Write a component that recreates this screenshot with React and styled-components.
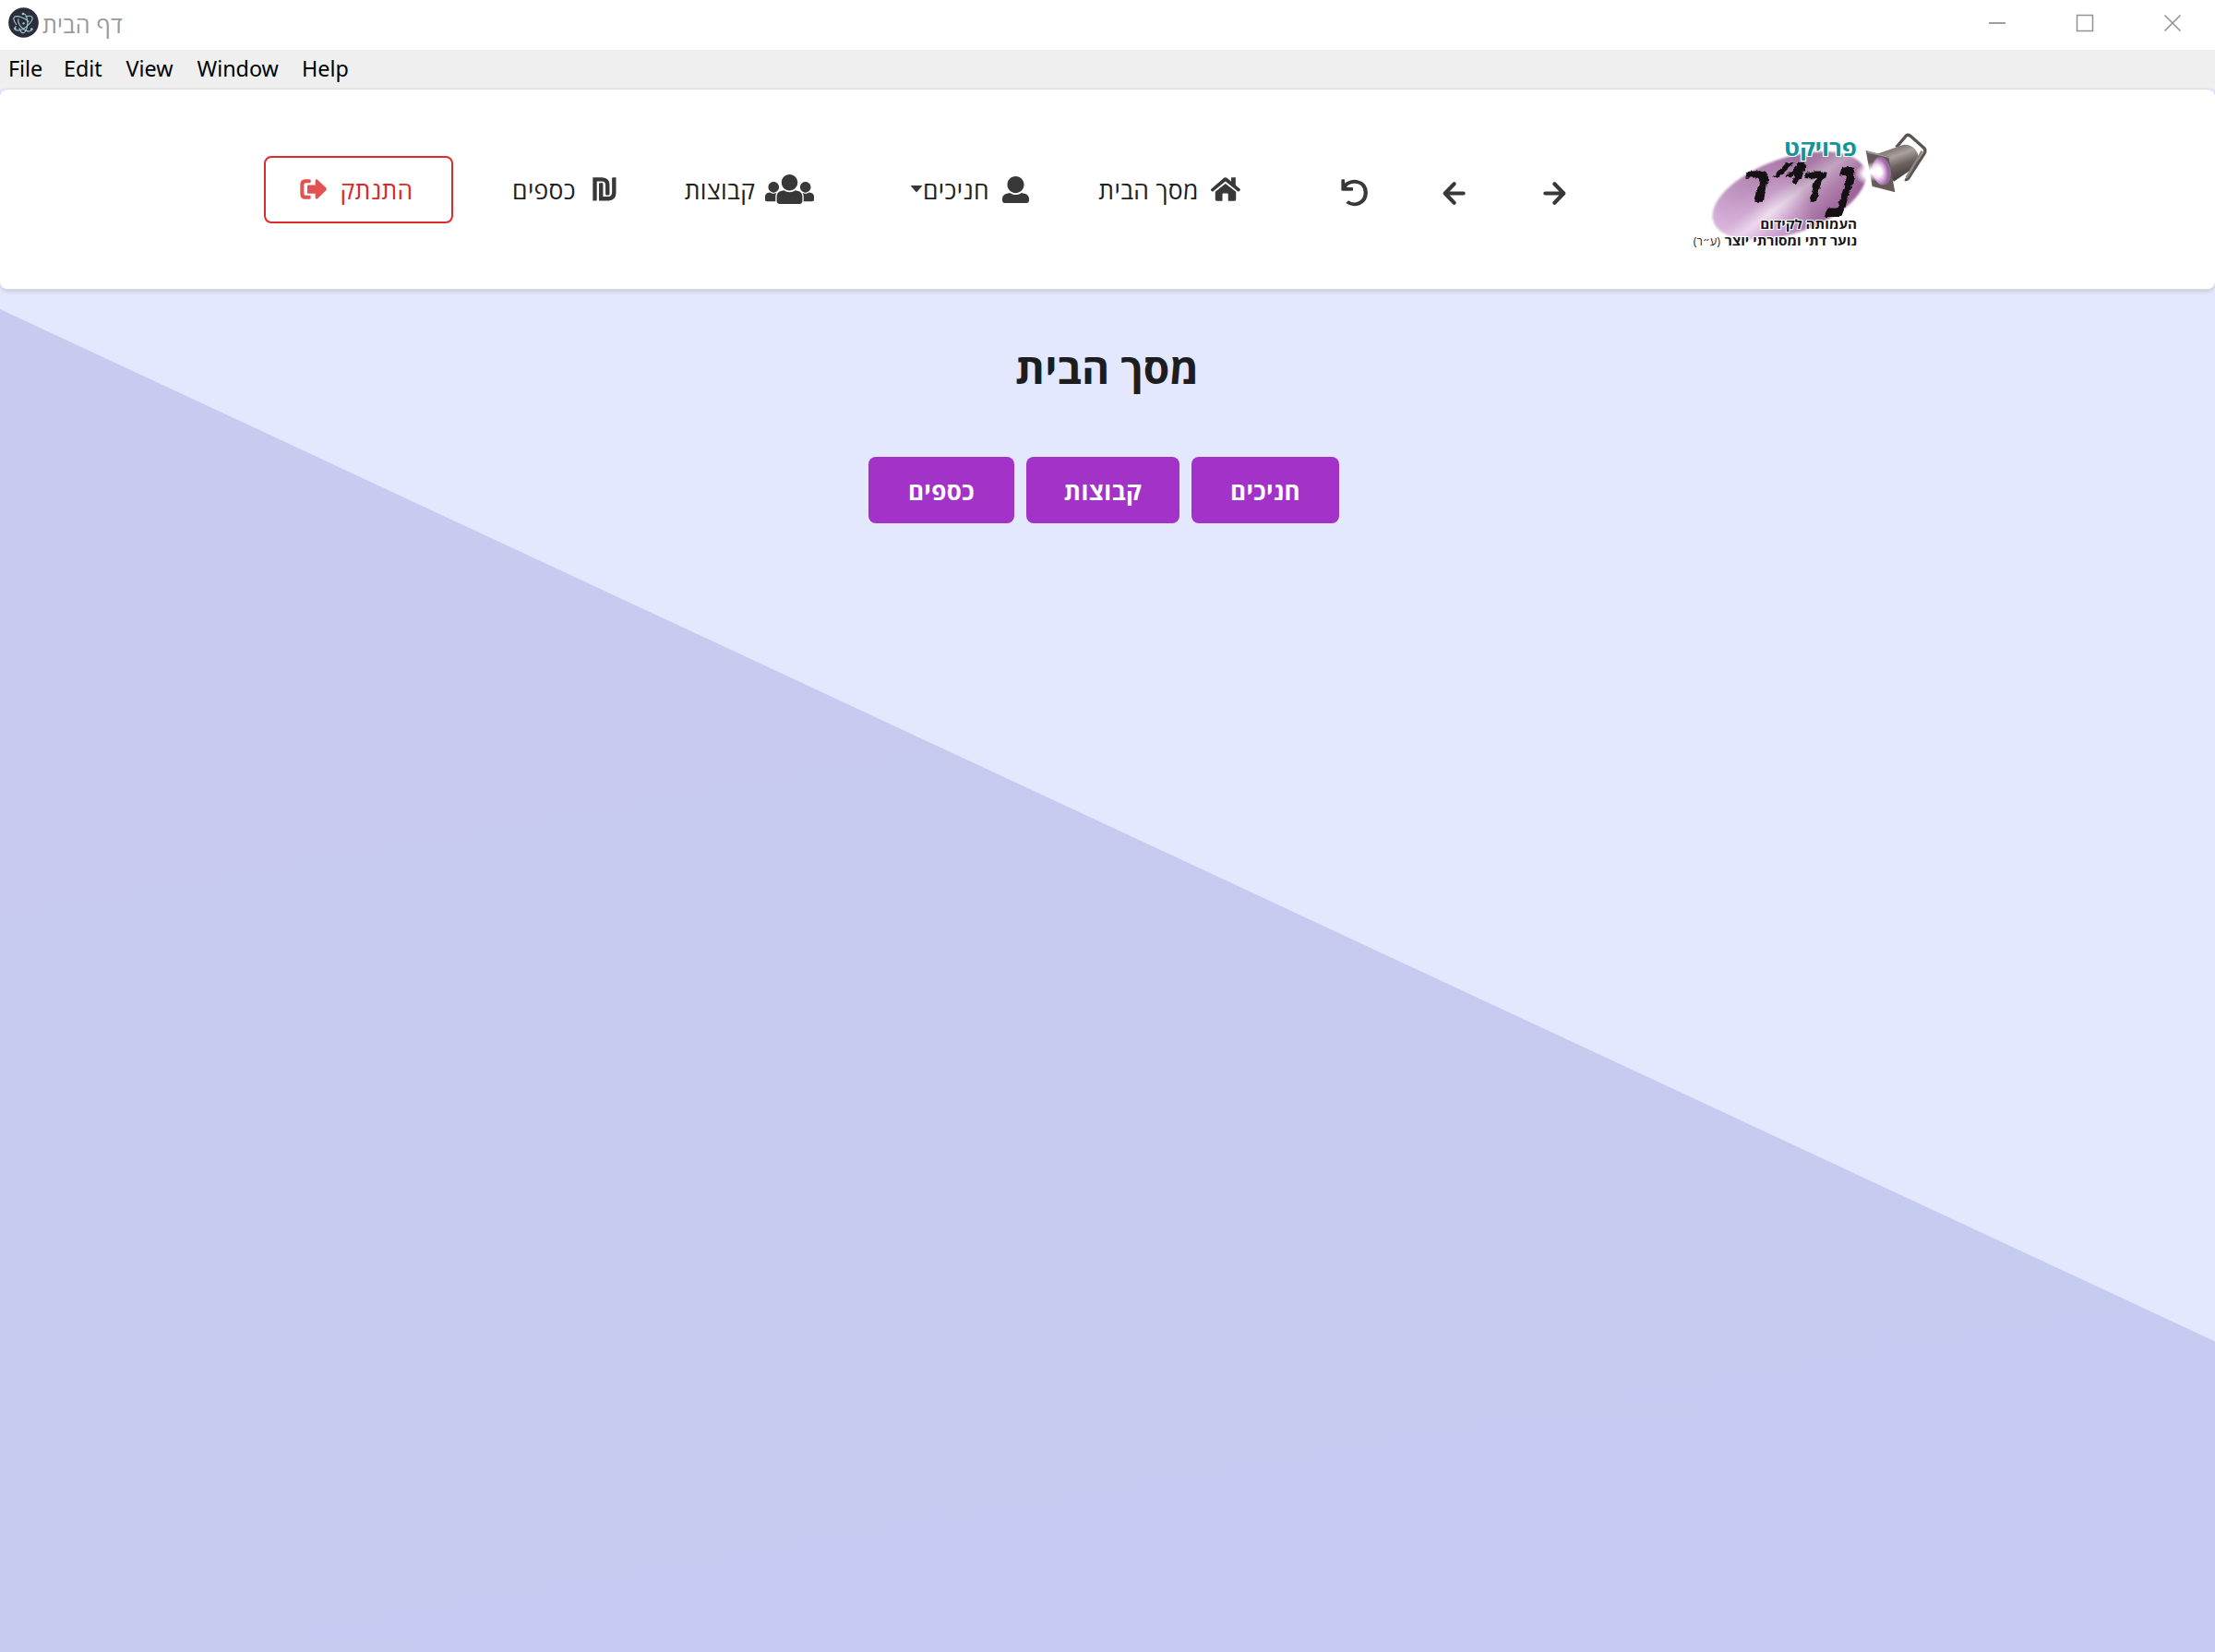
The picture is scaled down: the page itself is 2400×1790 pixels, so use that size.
import React from 'react';
import styled, { createGlobalStyle } from 'styled-components';

const GlobalStyle = createGlobalStyle`
  *, *::before, *::after { box-sizing: border-box; }
  body { margin: 0; background: #e3e8fe; font-family: 'Open Sans', 'Noto Sans', 'DejaVu Sans', sans-serif; }
`;

const Window = styled.div`
  display: flex;
  flex-direction: column;
  width: 2400px;
  height: 1790px;
  overflow: hidden;
  position: relative;
  isolation: isolate;
  background: #e3e8fe;
  &::before {
    content: '';
    position: absolute;
    inset: 0;
    z-index: -1;
    background: linear-gradient(170deg, #c8caef 30%, #c5cbf0 95%);
    clip-path: polygon(0 335px, 100% 1453.5px, 100% 100%, 0 100%);
  }
`;

const TitleBar = styled.header`
  display: flex;
  align-items: center;
  height: 54px;
  padding: 0 37px 5px 9px;
  background: #fff;
`;

const WindowTitle = styled.span`
  width: 87px;
  margin: 3px auto 0 4px;
  font-size: 25px;
  line-height: 32px;
  letter-spacing: 0.3px;
  white-space: nowrap;
  color: #999;
`;

const WindowControls = styled.div`
  display: flex;
  gap: 77px;
`;

const MenuBar = styled.nav`
  display: flex;
  height: 42px;
  padding-left: 9px;
  background: #efefef;
`;

const MenuEntry = styled.span`
  width: ${(p) => p.$width}px;
  font-family: 'Noto Sans', sans-serif;
  font-size: 23.3px;
  line-height: 41px;
  color: #000;
`;

const NavBar = styled.nav`
  display: flex;
  align-items: center;
  height: 218px;
  padding-left: 286px;
  background: #fff;
  border: solid #d9dae2;
  border-width: 1px 0;
  border-radius: 8px;
  box-shadow: 0 2px 4px rgba(34, 36, 38, 0.15);
`;

const NavLink = styled.a`
  display: flex;
  flex: none;
  align-items: center;
  margin-left: ${(p) => p.$before}px;
  height: 72px;
  color: #212121;
`;

const LogoutButton = styled.button`
  display: flex;
  flex: none;
  align-items: center;
  justify-content: center;
  gap: 16px;
  width: 205px;
  height: 73px;
  padding: 0 6px 0 0;
  background: #fff;
  border: 2px solid #dd2c2c;
  border-radius: 8px;
  color: #db2828;
  font-family: inherit;
`;

const Label = styled.span`
  display: flex;
  justify-content: center;
  width: ${(p) => p.$width}px;
  margin-top: 1px;
  margin-right: ${(p) => p.$gap || 0}px;
  font-size: 26.4px;
  letter-spacing: 0.35px;
  line-height: 36px;
  white-space: nowrap;
`;

const Glyph = styled.svg`
  display: block;
  flex: none;
  overflow: visible;
  fill: ${(p) => p.$color || '#383838'};
  margin-top: ${(p) => p.$drop || 0}px;
`;

const Brand = styled.div`
  flex: none;
  margin-left: 123.5px;
  margin-top: 1px;
  width: 280px;
  height: 150px;
`;

const BrandCaption = styled.g`
  direction: rtl;
  font-family: 'Open Sans', 'DejaVu Sans', sans-serif;
  font-weight: 700;
  stroke: #fff;
  stroke-width: 6;
  stroke-linejoin: round;
  paint-order: stroke;
`;

const BrushLettering = styled.g`
  font-family: 'Open Sans', 'DejaVu Sans', sans-serif;
  font-size: 150px;
  font-weight: 700;
  fill: #141013;
  stroke: #141013;
  stroke-width: 4;
`;

const Main = styled.main`
  display: flex;
  flex-direction: column;
  align-items: center;
`;

const Heading = styled.h1`
  margin: 53px 1px 1px 0;
  font-size: 46px;
  line-height: 62px;
  font-weight: 700;
  color: #1d1d1f;
`;

const ButtonRow = styled.div`
  display: flex;
  gap: 13px;
  margin: 65px 8px 0 0;
`;

const ActionButton = styled.button`
  width: ${(p) => p.$width}px;
  height: 72px;
  padding: 2px 0 0;
  border: 0;
  border-radius: 8px;
  background: #a333c8;
  color: #fff;
  font: 700 26px/36px 'Open Sans', 'DejaVu Sans', sans-serif;
  letter-spacing: 0.4px;
`;

const USERS =
  'M320 64c57.99 0 105 47.01 105 105s-47.01 105-105 105-105-47.01-105-105S262.01 64 320 64zm113.463 217.366l-39.982-9.996c-49.168 35.365-108.766 27.473-146.961 0l-39.982 9.996C174.485 289.379 152 318.177 152 351.216V412c0 19.882 16.118 36 36 36h264c19.882 0 36-16.118 36-36v-60.784c0-33.039-22.485-61.837-54.537-69.85zM528 300c38.66 0 70-31.34 70-70s-31.34-70-70-70-70 31.34-70 70 31.34 70 70 70zm-416 0c38.66 0 70-31.34 70-70s-31.34-70-70-70-70 31.34-70 70 31.34 70 70 70zm24 112v-60.784c0-16.551 4.593-32.204 12.703-45.599-29.988 14.72-63.336 8.708-85.69-7.37l-26.655 6.664C14.99 310.252 0 329.452 0 351.477V392c0 13.255 10.745 24 24 24h112.169a52.417 52.417 0 0 1-.169-4zm467.642-107.09l-26.655-6.664c-27.925 20.086-60.89 19.233-85.786 7.218C499.369 318.893 504 334.601 504 351.216V412c0 1.347-.068 2.678-.169 4H616c13.255 0 24-10.745 24-24v-40.523c0-22.025-14.99-41.225-36.358-46.567z';
const USER =
  'M256 0c88.366 0 160 71.634 160 160s-71.634 160-160 160S96 248.366 96 160 167.634 0 256 0zm183.283 333.821l-71.313-17.828c-74.923 53.89-165.738 41.864-223.94 0l-71.313 17.828C29.981 344.505 0 382.903 0 426.955V464c0 26.51 21.49 48 48 48h416c26.51 0 48-21.49 48-48v-37.045c0-44.052-29.981-82.45-72.717-93.134z';

const ElectronIcon = () => (
  <Glyph width="33" height="33" viewBox="0 0 99 99">
    <circle cx="49.5" cy="49.5" r="49" fill="#2b2e3a" />
    <g fill="none" stroke="#9fcad6" strokeWidth="3.4" strokeLinecap="round">
      <path d="M26 55C18 45 15 35 20 31C29 25 53 34 66 46" />
      <path d="M57 30C67 27 76 28 78 33C81 43 62 63 46 71C35 76 24 76 22 71C21 68 22 65 24 62" />
      <path d="M49 21C60 20 65 47 61 64C58 81 48 88 41 79C38 76 37 72 36 68" />
      <path d="M33 38C29 50 43 72 61 77C68 79 75 77 76 71" />
    </g>
    <g fill="#9fcad6">
      <circle cx="50" cy="52" r="3.6" />
      <circle cx="48" cy="21" r="4" />
      <circle cx="22" cy="69" r="4" />
      <circle cx="76" cy="71" r="4" />
    </g>
  </Glyph>
);

const HomeIcon = () => (
  <Glyph width="32" height="26" viewBox="464 125 87 77" preserveAspectRatio="none">
    <path d="M477 172L507 146L538 172V197Q538 201 534 201H515V180Q515 177 512 177H501Q498 177 498 180V201H481Q477 201 477 197Z" />
    <path d="M465 163L501 129Q507 123 513 129L524 139V126H537V151L550 163Q552 165 550 167L547 170Q545 172 543 170L507 138L471 170Q469 172 467 170L464 167Q463 165 465 163Z" />
  </Glyph>
);

const ShekelIcon = () => (
  <Glyph width="25.5" height="26" viewBox="1145 126 76 76">
    <path d="M1146 126H1176Q1200 127 1200 150V180Q1200 183 1197 183H1190Q1187 183 1187 180V151Q1187 139 1175 139H1159V198Q1159 201 1156 201H1146Z" />
    <path d="M1166 147Q1166 144 1169 144H1176Q1179 144 1179 147V188H1196Q1207 187 1208 175V129Q1208 126 1211 126H1221V177Q1220 200 1197 201H1166Z" />
  </Glyph>
);

const ArrowIcon = ({ back }) => (
  <Glyph width="25" height="25" viewBox="0 0 75 75" $drop={8}>
    <path
      d={back ? 'M68 37.5H12M38 7L8 37.5L38 68' : 'M7 37.5H63M37 7L67 37.5L37 68'}
      fill="none"
      stroke="#383838"
      strokeWidth="12.5"
      strokeLinecap="round"
      strokeLinejoin="round"
    />
  </Glyph>
);

const UndoIcon = () => (
  <Glyph width="29" height="29" viewBox="846 133 78 86" preserveAspectRatio="none" $drop={7}>
    <path d="M857 154C877 132 918 138 918 177C918 211 884 223 864 206" fill="none" stroke="#383838" strokeWidth="11.5" />
    <path d="M847 137Q847 134 850 134H854Q857 134 857 137V153L866 148L862 160H878Q881 160 881 163V168Q881 171 878 171H850Q847 171 847 168Z" />
  </Glyph>
);

const LogoutIcon = () => (
  <Glyph width="29" height="22" viewBox="195 131 87 65" $color="#e25252">
    <path d="M230 136V140Q230 143 227 143H214Q208 143 208 149V178Q208 184 214 184H227Q230 184 230 187V193Q230 196 227 196H212Q196 195 196 179V148Q196 132 212 131H227Q230 131 230 134Z" />
    <path d="M219 153Q219 150 222 150H245V136Q246 129 252 133L280 159Q283 163 280 167L252 194Q246 197 245 191V178H222Q219 178 219 175Z" />
  </Glyph>
);

const Logo = () => (
  <svg width="280" height="150" viewBox="0 0 840 450">
    <defs>
      <linearGradient id="oval" gradientUnits="userSpaceOnUse" x1="250" y1="120" x2="330" y2="370">
        <stop offset="0" stopColor="#a778a5" />
        <stop offset="0.2" stopColor="#b284b2" />
        <stop offset="0.42" stopColor="#c9a0ca" />
        <stop offset="0.6" stopColor="#f3e4f3" />
        <stop offset="0.78" stopColor="#d5add6" />
        <stop offset="1" stopColor="#bb86bb" />
      </linearGradient>
      <linearGradient id="fade" x1="0" x2="1">
        <stop offset="0" stopColor="#e6c6ea" stopOpacity="0.65" />
        <stop offset="0.35" stopColor="#d9b4dc" stopOpacity="0.1" />
        <stop offset="0.6" stopColor="#6b3b64" stopOpacity="0.3" />
        <stop offset="1" stopColor="#6b2b64" stopOpacity="0.4" />
      </linearGradient>
      <linearGradient id="can" x1="0.2" y1="0" x2="0.6" y2="1">
        <stop offset="0" stopColor="#5e5553" />
        <stop offset="0.35" stopColor="#aaa19f" />
        <stop offset="0.6" stopColor="#6b615f" />
        <stop offset="1" stopColor="#3c3533" />
      </linearGradient>
      <radialGradient id="lens" cx="0.35">
        <stop offset="0.25" stopColor="#fff" />
        <stop offset="0.65" stopColor="#dcaee0" />
        <stop offset="1" stopColor="#9a6ba0" />
      </radialGradient>
      <radialGradient id="glow">
        <stop offset="0.2" stopColor="#fff" />
        <stop offset="1" stopColor="#fff" stopOpacity="0" />
      </radialGradient>
      <filter id="soft"><feGaussianBlur stdDeviation="3" /></filter>
      <filter id="rough" x="-5%" y="-10%" width="110%" height="120%" colorInterpolationFilters="sRGB">
        <feTurbulence type="fractalNoise" baseFrequency="0.07" numOctaves="2" seed="4" />
        <feDisplacementMap in="SourceGraphic" scale="14" xChannelSelector="R" yChannelSelector="G" />
      </filter>
    </defs>
    <g transform="rotate(-19 356 243)" filter="url(#soft)">
      <ellipse cx="356" cy="243" rx="260" ry="122" fill="url(#oval)" />
      <ellipse cx="356" cy="243" rx="260" ry="122" fill="url(#fade)" />
    </g>
    <ellipse cx="606" cy="172" rx="36" ry="34" fill="url(#glow)" />
    <path d="M704 86L735 49Q742 43 750 49L792 86Q802 94 795 106L746 182Q740 193 732 190" fill="none" stroke="#5c5453" strokeWidth="10" />
    <path d="M640 108L728 77Q760 76 773 104Q782 133 768 148L696 197Z" fill="url(#can)" />
    <path d="M788 98L737 184" stroke="#8d8583" strokeWidth="8" />
    <path d="M605 96L679 116L700 232L626 213Z" fill="#655c5a" />
    <path d="M605 96L679 116L683 121L612 104Z" fill="#a49c99" />
    <ellipse cx="656" cy="163" rx="30" ry="46" transform="rotate(-10 656 163)" fill="url(#lens)" />
    <ellipse cx="627" cy="165" rx="38" ry="32" fill="url(#glow)" />
    <BrushLettering filter="url(#rough)">
      <text transform="translate(464 308) skewX(-17) scale(1.15 1.65)" fontWeight="600">נ</text>
      <text transform="translate(386 262) skewX(-14) scale(.86 .98)">ד</text>
      <text transform="translate(348 230) skewX(-17) scale(1 .92)">י</text>
      <text transform="translate(262 262) skewX(-23) scale(1 1.5)">״</text>
      <text transform="translate(196 260) skewX(-13) scale(1.08 1)">ר</text>
    </BrushLettering>
    <BrandCaption>
      <text x="576" y="114" fontSize="68" fill="#12949a" textLength="237" lengthAdjust="spacingAndGlyphs">פרויקט</text>
      <text x="576" y="350" fontSize="42" fill="#181417" textLength="314" lengthAdjust="spacingAndGlyphs">העמותה לקידום</text>
      <text x="576" y="405" fontSize="40" fill="#181417" textLength="430" lengthAdjust="spacingAndGlyphs">נוער דתי ומסורתי יוצר</text>
      <text x="132" y="405" fontSize="38" fill="#222" fontWeight="400" strokeWidth="0" textLength="88" lengthAdjust="spacingAndGlyphs">(ע״ר)</text>
    </BrandCaption>
  </svg>
);

export default function App() {
  return (
    <Window>
      <GlobalStyle />
      <TitleBar>
        <ElectronIcon />
        <WindowTitle dir="rtl">דף הבית</WindowTitle>
        <WindowControls>
          <Glyph width="18" height="18" viewBox="0 0 18 18"><path d="M0 9H18" stroke="#929292" strokeWidth="1.8" /></Glyph>
          <Glyph width="18" height="18" viewBox="0 0 18 18"><rect x=".5" y=".5" width="17" height="17" fill="none" stroke="#929292" strokeWidth="1.5" /></Glyph>
          <Glyph width="18" height="18" viewBox="0 0 18 18"><path d="M.5 .5L17.5 17.5M17.5 .5L.5 17.5" stroke="#929292" strokeWidth="1.6" /></Glyph>
        </WindowControls>
      </TitleBar>
      <MenuBar>
        <MenuEntry $width={60}>File</MenuEntry>
        <MenuEntry $width={67.5}>Edit</MenuEntry>
        <MenuEntry $width={77}>View</MenuEntry>
        <MenuEntry $width={113.5}>Window</MenuEntry>
        <MenuEntry $width={60}>Help</MenuEntry>
      </MenuBar>
      <NavBar>
        <LogoutButton>
          <LogoutIcon />
          <Label $width={77}>התנתק</Label>
        </LogoutButton>
        <NavLink $before={65}>
          <Label $width={67} $gap={18.5}>כספים</Label>
          <ShekelIcon />
        </NavLink>
        <NavLink $before={74}>
          <Label $width={78} $gap={10}>קבוצות</Label>
          <Glyph width="53" height="32" viewBox="0 64 640 384"><path d={USERS} /></Glyph>
        </NavLink>
        <NavLink $before={104}>
          <Glyph width="14" height="8" viewBox="0 0 14 8"><path d="M.5 0H13.5L7 7.5Z" /></Glyph>
          <Label $width={72} $gap={13.5}>חניכים</Label>
          <Glyph width="29" height="29" viewBox="0 0 512 512"><path d={USER} /></Glyph>
        </NavLink>
        <NavLink $before={75}>
          <Label $width={110} $gap={12} dir="rtl">מסך הבית</Label>
          <HomeIcon />
        </NavLink>
        <NavLink $before={109}><UndoIcon /></NavLink>
        <NavLink $before={81.5}><ArrowIcon back /></NavLink>
        <NavLink $before={83.5}><ArrowIcon /></NavLink>
        <Brand><Logo /></Brand>
      </NavBar>
      <Main>
        <Heading>מסך הבית</Heading>
        <ButtonRow>
          <ActionButton $width={158}>כספים</ActionButton>
          <ActionButton $width={166}>קבוצות</ActionButton>
          <ActionButton $width={160}>חניכים</ActionButton>
        </ButtonRow>
      </Main>
    </Window>
  );
}
